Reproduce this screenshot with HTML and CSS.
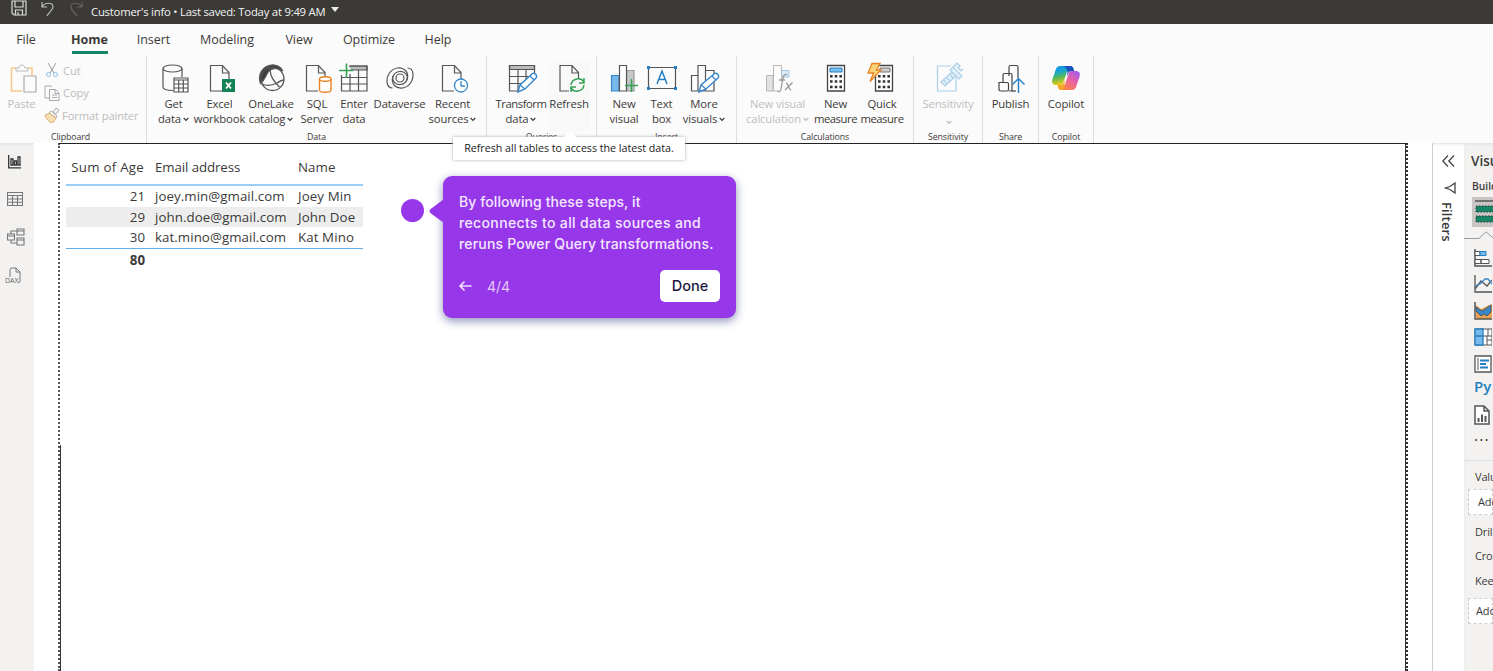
FILE: index.html
```html
<!DOCTYPE html>
<html lang="en">
<head>
<meta charset="utf-8">
<title>Customer's info</title>
<link rel="stylesheet" href="styles.css">
</head>
<body>
<svg class="defs" width="0" height="0">
  <symbol id="chev" viewBox="0 0 6 5"><path d="M.7 1 3 3.4 5.300 1" fill="none" stroke="currentColor" stroke-width="1.200"/></symbol>
  <symbol id="doc" viewBox="0 0 32 32"><path d="M18 29H6.500V3.500h12l6.500 7V17M18.500 3.500V11H25" fill="none" stroke="#555" stroke-width="1.200"/></symbol>
</svg>
<header class="titlebar">
  <svg class="save" width="16" height="16" viewBox="0 0 16 16" fill="none" stroke="#ddd" stroke-width="1.200"><path d="M1 1h14v14H3l-2-2zM4 1v6h8V1M4.500 15v-5h7v5M7 12v3"/></svg>
  <svg class="undo" width="16" height="16" viewBox="0 0 16 16" fill="none" stroke="#bbb" stroke-width="1.200"><path d="M2 1v5h5M2 6c3-5 11-5 11 0 0 3-4 5-6 9"/></svg>
  <svg class="redo" width="16" height="16" viewBox="0 0 16 16" fill="none" stroke="#676562" stroke-width="1.200"><path d="M14 1v5H9M14 6C11 1 3 1 3 6c0 3 3 5 6 9"/></svg>
  <span class="doc-name">Customer's info • Last saved: Today at 9:49 AM</span>
  <svg class="caret" width="8" height="5" viewBox="0 0 8 5"><path d="M0 0h8L4 5z" fill="#eee"/></svg>
</header>
<nav class="tabs">
  <span>File</span><span class="active">Home</span><span>Insert</span><span>Modeling</span><span>View</span><span>Optimize</span><span>Help</span>
</nav>
<section class="ribbon">
  <div class="group clipboard">
    <div class="tools">
      <div class="tool paste off">
        <svg width="32" height="32" viewBox="0 0 32 32" fill="none"><path d="M15 29H4.500V6H9M21 6h4v7" stroke="#f7c78b" stroke-width="1.500"/><path d="M9 9V6h3c0-4 6-4 6 0h3v3z" stroke="#b9b9b9"/><path d="M17 14h12v16H17z" fill="#fcfcfc" stroke="#aaa" stroke-width="1.200"/></svg>
        <b>Paste</b>
      </div>
      <div class="mini">
        <p class="cut"><svg width="16" height="16" viewBox="0 0 16 16" fill="none" stroke="#999"><path d="m4 1 6 10M12 1 6 11"/><circle cx="4.500" cy="12.500" r="2" stroke="#8abfe5"/><circle cx="11.500" cy="12.500" r="2" stroke="#8abfe5"/></svg>Cut</p>
        <p class="copy"><svg width="16" height="16" viewBox="0 0 16 16" fill="none" stroke="#aaa"><path d="M5 13H1V1h6l1 1M5.500 4.500h6l3.500 3.500v7.500H5.500zM11 4.500v4h4M8 10h5M8 12.500h5"/></svg>Copy</p>
        <p class="format"><svg width="16" height="16" viewBox="0 0 16 16" fill="none" stroke="#aaa"><path d="m9 5 3-4 3 2-3 4zM7 4l6 5-1 2-7-5z"/><path d="M5 6C4 7 2 8 1 8c1 4 4 7 7 8 2-1 3-3 4-5z" fill="#f8dfb4" stroke="#d7ad78"/></svg>Format painter</p>
      </div>
    </div>
    <div class="caption">Clipboard</div>
  </div>
  <div class="group data">
    <div class="tools">
      <div class="tool w45"><svg width="32" height="32" viewBox="0 0 32 32" fill="none" stroke="#555" stroke-width="1.200"><ellipse cx="14.500" cy="6.500" rx="9.500" ry="3.500"/><path d="M5 6.500V25c0 2 3 3.500 10 3.500M24 6.500V15"/><path d="M16 16h14v14H16z" fill="#fff"/><path d="M16 18h14M16 22h14M16 26h14M20.700 18v12M25.300 18v12"/></svg><b>Get</b><b>data<svg class="chev"><use href="#chev"/></svg></b></div>
      <div class="tool w47"><svg width="32" height="32" viewBox="0 0 32 32"><use href="#doc"/><path d="M18 17h13v13H18z" fill="#138353"/><path d="m22 20.500 5 6m0-6-5 6" stroke="#fff" stroke-width="1.900"/></svg><b>Excel</b><b>workbook</b></div>
      <div class="tool w56"><svg width="32" height="32" viewBox="0 0 32 32" fill="none" stroke="#555" stroke-width="1.300"><path d="M5.500 21.500C2.500 13 7 4 17.500 3c4.500 0 8 2 10.500 6-4-3-9-3.500-13-1-4 3-4 9-9.500 13.500z" fill="#3b3b3b"/><circle cx="17.500" cy="17" r="11.500"/><path d="M15 8c1 9 5 12 9.500 17M7 22c6 3 11 1 15-1 3-2 5-3 7-3"/></svg><b>OneLake</b><b>catalog<svg class="chev"><use href="#chev"/></svg></b></div>
      <div class="tool w36"><svg width="32" height="32" viewBox="0 0 32 32"><use href="#doc" x="-1"/><path d="M17 15h15v15H17z" fill="#fbfbfb"/><path d="M18.500 17v11c0 3 11.500 3 11.500 0V17" fill="#fff" stroke="#e78425" stroke-width="1.400"/><ellipse cx="24.250" cy="17" rx="5.750" ry="2.300" fill="#fff" stroke="#e78425" stroke-width="1.400"/></svg><b>SQL</b><b>Server</b></div>
      <div class="tool w38"><svg width="32" height="32" viewBox="0 0 32 32" fill="none" stroke="#555" stroke-width="1.200"><path d="M11 4h18v4H13" fill="#bbb"/><path d="M3.500 13v16H29V4H12M3.500 15.500H29M3.500 22H29M12 12v17M20.500 8v21"/><path d="M8.500 1.500v14M1 8.500h14" stroke="#35a155" stroke-width="1.600"/></svg><b>Enter</b><b>data</b></div>
      <div class="tool w53"><svg width="32" height="32" viewBox="0 0 32 32" fill="none" stroke="#555" stroke-width="1.200"><circle cx="16" cy="16" r="4"/><path d="M8.500 26C1.500 26 2 16 5.500 11 9.500 5.500 17 4 21.500 8.500c4.500 5 1.500 13.500-5 14-5.500.5-9-4-7.500-8.500"/><path d="M23.500 6c7 0 6.500 10 3 15-4 5.500-11.500 7-16 2.500-4.500-5-1.500-13.500 5-14 5.500-.5 9 4 7.500 8.500"/></svg><b>Dataverse</b></div>
      <div class="tool w53"><svg width="32" height="32" viewBox="0 0 32 32"><use href="#doc" x="-1"/><circle cx="24" cy="23.500" r="6.500" fill="#fff" stroke="#3887cb" stroke-width="1.300"/><path d="M24 19v5h4" fill="none" stroke="#3887cb" stroke-width="1.300"/></svg><b>Recent</b><b>sources<svg class="chev"><use href="#chev"/></svg></b></div>
    </div>
    <div class="caption">Data</div>
  </div>
  <div class="group queries">
    <div class="tools">
      <div class="tool w54 nudge"><svg width="32" height="32" viewBox="0 0 32 32" fill="none" stroke="#555" stroke-width="1.200"><path d="M3.500 3.500h25v4h-25z" fill="#bbb"/><path d="M13 29H3.500V3.500h25V12M3.500 14.500H23M3.500 21.500H16M12 8v21M20 8v9"/><path d="m12 30 2-7L26 12c2-2 6 1 4 4L19 27z" fill="#fff" stroke="#3887cb" stroke-width="1.400"/><path d="m14 23 5 4m5-13 4 4" stroke="#3887cb"/></svg><b class="tight">Transform</b><b>data<svg class="chev"><use href="#chev"/></svg></b></div>
      <div class="tool w42 hover"><svg width="32" height="32" viewBox="0 0 32 32"><use href="#doc" x="-1.500"/><path d="M14 17h16v13H14z" fill="#f8f8f8"/><path d="M16 23c1-7 10-8 13-3m0-4v5h-5m5 2c-1 7-10 8-13 3m0 4v-5h5" fill="none" stroke="#35a155" stroke-width="1.500"/></svg><b>Refresh</b></div>
    </div>
    <div class="caption">Queries</div>
  </div>
  <div class="group insert">
    <div class="tools">
      <div class="tool w36"><svg width="32" height="32" viewBox="0 0 32 32" stroke="#555" stroke-width="1.200"><path d="M3.500 13.500H11V29H3.500z" fill="#78b9eb" stroke="#3887cb"/><path d="M18.500 8.500H26V29h-7.500z" fill="#c7c7c7" stroke="#999"/><path d="M11.500 3.500h7V29h-7z" fill="#fff"/><path d="M23.500 17v13M17 23.500h13" stroke="#35a155" stroke-width="1.600"/></svg><b>New</b><b>visual</b></div>
      <div class="tool w39"><svg width="32" height="32" viewBox="0 0 32 32"><path d="M2.500 5.500h27v21h-27z" fill="none" stroke="#555" stroke-width="1.200"/><path d="M1 4h3v3H1zM28 4h3v3h-3zM1 25h3v3H1zM28 25h3v3h-3z" fill="#257fc4"/><path d="m11 22 5-13 5 13m-8.200-4.500h6.400" fill="none" stroke="#257fc4" stroke-width="1.500"/></svg><b>Text</b><b>box</b></div>
      <div class="tool w46"><svg width="32" height="32" viewBox="0 0 32 32" fill="#fcfcfc" stroke="#555" stroke-width="1.200"><path d="M3.500 13.500H10V29H3.500zM17.500 8.500H26V29h-8.500zM10 3.500h7.500V29H10z"/><path d="m11 30 2-7L26 12c2-2 6 1 4 4L18 27z" fill="#fff" stroke="#3887cb" stroke-width="1.400"/><path d="m13 23 5 4m6-13 4 4" stroke="#3887cb"/></svg><b>More</b><b>visuals<svg class="chev"><use href="#chev"/></svg></b></div>
    </div>
    <div class="caption">Insert</div>
  </div>
  <div class="group calc">
    <div class="tools">
      <div class="tool w67 off"><svg width="32" height="32" viewBox="0 0 32 32" stroke="#b8b8b8"><path d="M4.500 13.500H11V29H4.500z" fill="#e2e2e2"/><path d="M19.500 8.500H27V15h-7.500z" fill="#d7eaf8" stroke="#a8c9df"/><path d="M11.500 3.500h8V29h-8z" fill="#fcfcfc"/><path d="M16 18h15v12H16z" fill="#fcfcfc" stroke="none"/><path d="M25 13c-3-2-4 2-4.500 5L19 27c-.5 3-2 3-3.500 2M17 18h6m1 3c2 0 3 7 5 7m1.500-7.500L23 28" fill="none" stroke="#999" stroke-width="1.300"/></svg><b>New visual</b><b>calculation<svg class="chev"><use href="#chev"/></svg></b></div>
      <div class="tool w49"><svg width="32" height="32" viewBox="0 0 32 32"><path d="M7.500 3.500h17V29h-17z" fill="#fff" stroke="#444" stroke-width="1.300"/><path d="M10 6h12v4H10z" fill="#78c0f0" stroke="#257fc4"/><g id="keys" fill="none" stroke="#333" stroke-width="2.600" stroke-dasharray="2.600 2.100"><path d="M10 14.300h12.500M10 19.500h12.500M10 25h12.500"/></g></svg><b>New</b><b class="tight">measure</b></div>
      <div class="tool w44"><svg width="32" height="32" viewBox="0 0 32 32"><path d="M9.500 3.500h17V29h-17z" fill="#fff" stroke="#444" stroke-width="1.300"/><path d="M14 6h10v4H14z" fill="#ccc" stroke="#777"/><use href="#keys" x="2"/><path d="M6 1.500h8L10.500 8H15L4 19.500 7.500 11H2z" fill="#fbd37a" stroke="#e78425" stroke-width="1.300"/></svg><b>Quick</b><b class="tight">measure</b></div>
    </div>
    <div class="caption">Calculations</div>
  </div>
  <div class="group sens">
    <div class="tools">
      <div class="tool off nudge"><svg width="32" height="32" viewBox="0 0 32 32" fill="none" stroke="#a9cfe9" stroke-width="1.200"><path d="M18 4H4.500v25H23V16"/><path d="m8 20 11-10 4 4-11 10z" fill="#e4f1fa"/><path d="m17 8 3-3 9 9-3 3zM20 5l4-4 3 3-2 2 3 3 2-2M11 18l3 4m0-6 3 3m0-6 3 3" fill="#e4f1fa"/></svg><b>Sensitivity</b><b class="only-chev"><svg class="chev"><use href="#chev"/></svg></b></div>
    </div>
    <div class="caption">Sensitivity</div>
  </div>
  <div class="group share">
    <div class="tools">
      <div class="tool"><svg width="32" height="32" viewBox="0 0 32 32" fill="#fcfcfc" stroke="#444" stroke-width="1.200"><path d="M14 14V5q0-1.500 1.500-1.500h6Q23 3.500 23 5v24h-9M8 20v-7q0-1.500 1.500-1.500h6Q17 11.500 17 13v16M4 20.500h8q1.500 0 1.500 1.500v5.500q0 1.500-1.500 1.500H6q-2 0-2-1.500z"/><path d="M18 16h10v14H18z" stroke="none"/><path d="M17 29h4" /><path d="M23.500 31V16.500M17.500 22.500l6-6 6 6" fill="none" stroke="#2f85cc" stroke-width="1.500"/></svg><b>Publish</b></div>
    </div>
    <div class="caption">Share</div>
  </div>
  <div class="group copilot">
    <div class="tools">
      <div class="tool"><svg width="32" height="32" viewBox="0 0 32 32"><defs><linearGradient id="ca" x1="0" y1="0" x2=".2" y2="1"><stop offset="0" stop-color="#1b8fe8"/><stop offset=".35" stop-color="#16a6cf"/><stop offset=".65" stop-color="#58b956"/><stop offset="1" stop-color="#e7cc16"/></linearGradient><linearGradient id="cb" x1=".8" y1="0" x2=".2" y2="1"><stop offset="0" stop-color="#a55be9"/><stop offset=".5" stop-color="#ed61a0"/><stop offset="1" stop-color="#f9893e"/></linearGradient></defs><path d="M20 4h-9C7 4 6 6 5 10L2.500 17c-1 4 0 6 4 6H10c2 0 3-1 3.500-3l3-9c.5-2 1.500-3 3.500-3z" fill="url(#ca)"/><path d="M12 28h9c4 0 5-2 6-6l2.500-7c1-4 0-6-4-6H22c-2 0-3 1-3.500 3l-3 9c-.5 2-1.500 3-3.500 3z" fill="url(#cb)"/><path d="M12 4h8c3 0 3.500 2 4.300 5H22c-2.500 0-3.500 1-4 3l-1.500 3 1-4c0-4-2-7-5.500-7z" fill="#1951bd"/><path d="M7.500 23H10c2.500 0 3.500-1 4-3l1.500-3-1 4c0 4-1 7-3 7-3 0-3.500-2-4-5z" fill="#f4a62c"/></svg><b>Copilot</b></div>
    </div>
    <div class="caption">Copilot</div>
  </div>
</section>
<main class="workspace">
  <aside class="rail">
    <svg width="16" height="16" viewBox="0 0 16 16" fill="none" stroke="#333" stroke-width="1.300"><path d="M1.700 1v12.800H14M4 5h2v6H4zM7.500 7h2v4h-2zM11 3h2v8h-2z"/></svg>
    <svg width="16" height="16" viewBox="0 0 16 16" fill="none" stroke="#777" stroke-width="1.100"><path d="M.5 1.500h15v13H.5zM.5 4.500h15M.5 8h15M.5 11.200h15M5.500 4.500v10M10.500 4.500v10"/></svg>
    <svg width="19" height="18" viewBox="0 0 19 18" fill="none" stroke="#777" stroke-width="1.100"><path d="M.5 6h7v6h-7zM.5 8h7M10 1h7v6h-7zM10 3h7M10 10h7v7h-7zM10 12h7M4 6V3h6M4 12v3h6"/></svg>
    <svg class="dax-icon" width="18" height="18" viewBox="0 0 18 18" fill="none" stroke="#777"><path d="M5 10V3q0-2 2-2h4l4 4v9q0 2-2 2M11 1v4h4"/><text x="0" y="16" class="dax">DAX</text></svg>
  </aside>
  <section class="canvas">
    <div class="page">
      <div class="table">
        <div class="row head"><span>Sum of Age</span><span>Email address</span><span>Name</span></div>
        <div class="row"><span>21</span><span>joey.min@gmail.com</span><span>Joey Min</span></div>
        <div class="row alt"><span>29</span><span>john.doe@gmail.com</span><span>John Doe</span></div>
        <div class="row"><span>30</span><span>kat.mino@gmail.com</span><span>Kat Mino</span></div>
        <div class="row total"><span>80</span></div>
      </div>
    </div>
  </section>
  <aside class="filters">
    <svg width="13" height="12" viewBox="0 0 13 12" fill="none" stroke="#444" stroke-width="1.300"><path d="M6 .5.8 6 6 11.500M12 .5 6.800 6l5.200 5.500"/></svg>
    <svg class="funnel" width="12" height="12" viewBox="0 0 12 12" fill="none" stroke="#444" stroke-width="1.300"><path d="M11 1v10L6 7.500 1.500 6 6 4.500z"/></svg>
    <span>Filters</span>
  </aside>
  <aside class="visuals">
    <h2>Visualizations</h2>
    <h3>Build visual</h3>
    <div class="selected"><svg width="24" height="24" viewBox="0 0 24 24"><path d="M0 1h24" stroke="#555" stroke-width="1.500"/><path d="M1 6h24v6H1zM1 16h24v6H1z" fill="#168467" stroke="#333" stroke-dasharray="1.500 1.500"/></svg></div>
    <svg class="notch" width="29" height="8" viewBox="0 0 29 8" fill="none" stroke="#999"><path d="M0 7.500h15L22 .8l7 6"/></svg>
    <div class="gallery">
      <svg width="18" height="18" viewBox="0 0 18 18" fill="#fff" stroke="#555"><path d="M1 0v17h17" fill="none" stroke-width="1.500"/><path d="M1 2.500h5v4H1zM1 10.500h6v4H1zM7 10.500h8v4H7z"/><path d="M6 2.500h6v4H6z" fill="#78b9eb" stroke="#257fc4"/></svg>
      <svg width="18" height="18" viewBox="0 0 18 18" fill="none" stroke="#555" stroke-width="1.300"><path d="M1 0v17h17M1 14l6-8 6 5 5-6"/><path d="m1 11 5-2 5-5 3 0 4 5" stroke="#3887cb"/></svg>
      <svg width="18" height="18" viewBox="0 0 18 18"><path d="m2 3 5 4 6-3 5-2v15H2z" fill="#e9a354"/><path d="m2 5 6 4 9-6v7l-4 4-3-2-3 2-5-5z" fill="#3887cb" stroke="#555"/><path d="M1 0v17h17" fill="none" stroke="#555" stroke-width="1.500"/></svg>
      <svg width="18" height="18" viewBox="0 0 18 18" fill="#fff" stroke="#555"><path d="M1 1h17v16H1z"/><path d="M1 1h8v16H1zM1 8h8" fill="#78b9eb" stroke="#257fc4" stroke-width="1.300"/><path d="M9 8h9M13 8v9M13 12h5M14 1v7"/></svg>
      <svg width="18" height="18" viewBox="0 0 18 18" fill="#fff" stroke="#555" stroke-width="1.300"><path d="M1 1h16v16H1z"/><path d="M4 3v12" stroke-width="1"/><path d="M6 5.500h9M6 9h6M6 12.500h8" stroke="#257fc4" stroke-width="1.800"/></svg>
      <span class="py">Py</span>
      <svg width="16" height="20" viewBox="0 0 16 20" fill="#fff" stroke="#555" stroke-width="1.500"><path d="M1 1h9l5 5v13H1zM10 1v5h5"/><path d="M4.500 17v-4M8 17V9.500M11.500 17v-6" stroke-width="2"/></svg>
      <span class="dots">···</span>
    </div>
    <div class="fields">
      <p class="label values">Values</p><p class="well first">Add data fields here</p>
      <p class="label drill">Drill through</p><p class="label cross">Cross-report</p><p class="label keep">Keep all filters</p><p class="well">Add drill-through fields here</p>
    </div>
  </aside>
</main>
<div class="tooltip">Refresh all tables to access the latest data.</div>
<div class="beacon"></div>
<div class="coach">
  <svg class="pointer" width="15" height="24" viewBox="0 0 15 24"><path d="M15 0v24L2 14.500q-3-2.500 0-4.700z" fill="#9638e9"/></svg>
  <p><span class="l1">By following these steps, it</span><br><span class="l2">reconnects to all data sources and</span><br><span class="l3">reruns Power Query transformations.</span></p>
  <div class="actions">
    <svg width="13" height="10" viewBox="0 0 13 10" fill="none" stroke="#f0e0ff" stroke-width="1.700" stroke-linecap="round" stroke-linejoin="round"><path d="M12 5H1M5 1 1 5l4 4"/></svg>
    <span class="step">4/4</span><button>Done</button>
  </div>
</div>
</body>
</html>
```
FILE: styles.css
```css
* { box-sizing: border-box; }
body { margin: 0; width: 1493px; height: 671px; overflow: hidden; display: flex; flex-direction: column; position: relative; background: #fff; color: #3b3a39; font-family: "Open Sans", "Noto Sans", sans-serif; }
p, h2, h3 { margin: 0; }
b { font-weight: 400; }
svg { flex: none; }
.defs { position: absolute; }

.titlebar { flex: 0 0 24px; display: flex; background: #3b3a37; color: #f4f4f4; padding-left: 11px; font-size: 11.300px; line-height: 24px; }
.undo { margin: 1px 0 0 13px; }
.redo { margin: 1px 0 0 12px; }
.doc-name { margin-left: 7px; width: 235px; white-space: nowrap; letter-spacing: -.22px; }
.caret { margin: 7px 0 0 5px; }

.tabs { flex: 0 0 32px; display: flex; padding-left: 4px; background: #fbfbfb; font-size: 12.500px; line-height: 32px; }
.tabs span { display: flex; justify-content: center; width: 44px; white-space: nowrap; letter-spacing: -.05px; }
.tabs span:nth-child(2) { width: 83px; }
.tabs span:nth-child(3) { width: 45px; }
.tabs span:nth-child(4) { width: 102px; }
.tabs span:nth-child(5) { width: 42px; }
.tabs span:nth-child(6) { width: 98px; }
.tabs span:nth-child(7) { width: 40px; }
.tabs .active { font-weight: 700; background: linear-gradient(#168467, #168467) 50% 27px / 36px 3px no-repeat; }

.ribbon { flex: 0 0 87px; display: flex; background: #fbfbfb; }
.group { height: 87px; border-right: 1px solid #dedede; display: flex; flex-direction: column; padding-top: 6px; }
.tools { display: flex; height: 70px; }
.tool { display: flex; flex-direction: column; align-items: center; width: 100%; font-size: 11.300px; line-height: 15px; white-space: nowrap; letter-spacing: -.15px; }
.tool b { display: flex; align-items: center; }
.tool > svg { margin-bottom: 2px; }
.tool .tight { letter-spacing: -.45px; }
.off { color: #bdbdbd; }
.chev { width: 6px; height: 5px; margin: 2px 0 0 2px; }
.only-chev { height: 15px; padding-top: 5px; }
.caption { font-size: 8.800px; line-height: 12px; text-align: center; letter-spacing: -.1px; }
.clipboard { width: 147px; }
.clipboard .caption { padding-right: 5px; }
.data { width: 340px; }
.data .tools { padding-left: 4px; }
.queries { width: 110px; }
.queries .tools { padding-left: 7px; }
.insert { width: 140px; }
.insert .tools { padding-left: 9px; }
.calc { width: 177px; }
.calc .tools { padding-left: 7px; }
.sens { width: 69px; }
.share { width: 56px; }
.copilot { width: 55px; }
.w36 { width: 36px; } .w38 { width: 38px; } .w39 { width: 39px; } .w42 { width: 42px; } .w44 { width: 44px; } .w45 { width: 45px; } .w46 { width: 46px; } .w47 { width: 47px; } .w49 { width: 49px; } .w53 { width: 53px; } .w54 { width: 54px; } .w56 { width: 56px; } .w67 { width: 67px; }
.nudge > svg { margin-left: 2px; }
.hover { background: #f8f8f8; }
.hover > svg { margin-left: 4px; }
.paste { width: 43px; }
.paste > svg { margin-left: 2px; }
.mini { margin-top: -3px; color: #bdbdbd; font-size: 11.200px; letter-spacing: -.12px; }
.mini p { display: flex; align-items: center; gap: 3px; height: 22.500px; padding-left: 1px; white-space: nowrap; }
.mini .format { gap: 2px; }

.workspace { flex: 1; display: flex; min-height: 0; }
.rail { width: 34px; background: #f3f2f1; display: flex; flex-direction: column; padding: 11px 0 0 7px; gap: 21px; box-shadow: inset 0 3px 3px -2px #ddd; }
.dax-icon { margin-left: -2px; }
.dax { font-size: 7px; fill: #666; stroke: none; }
.canvas { flex: 1; padding: 0 24px 0 24px; }
.page { height: 100%; border-top: 1px solid #222; border-left: 2px dotted #555; border-right: 2px dotted #333; padding: 8px 0 0 6px; background: linear-gradient(#333, #333) 0 301px / 1px 400px no-repeat, linear-gradient(#333, #333) 100% 0 / 1px 100% no-repeat; }
.table { width: 297px; font-size: 13.300px; }
.row { display: grid; grid-template-columns: 83px 143px 1fr; height: 20.700px; line-height: 20px; white-space: nowrap; }
.row span:first-child { text-align: right; padding-right: 4px; }
.row span:nth-child(2) { padding-left: 6px; letter-spacing: .06px; }
.row span:nth-child(3) { padding-left: 6px; letter-spacing: .1px; }
.row.head span:first-child { letter-spacing: .25px; padding-right: 5px; }
.row.head span:nth-child(2) { letter-spacing: -.1px; }
.head { height: 34px; line-height: 30px; border-bottom: 2px solid #9bcdf5; }
.alt { background: #ededed; }
.total { border-top: 1px solid #62aeea; font-weight: 700; line-height: 22px; height: 24px; }

.filters { width: 32px; border-left: 1px solid #cfcfcf; display: flex; flex-direction: column; align-items: flex-start; padding: 12px 0 0 9px; box-shadow: inset 0 3px 3px -2px #ddd; }
.funnel { margin: 15px 0 0 2px; }
.filters span { writing-mode: vertical-rl; font-size: 13px; font-weight: 600; line-height: 16px; margin: 8px 0 0 -3px; letter-spacing: .15px; }
.visuals { width: 29px; background: #f3f2f1; overflow: hidden; white-space: nowrap; display: flex; flex-direction: column; box-shadow: inset 1px 3px 3px -2px #ddd; }
.visuals h2 { font-size: 13.500px; font-weight: 600; line-height: 18px; margin: 9px 0 0 7px; }
.visuals h3 { font-size: 10.300px; font-weight: 600; line-height: 16px; margin: 8px 0 0 8px; }
.selected { background: #c8c6c4; height: 30px; margin: 3px 0 0 8px; padding: 3px 0 0 3px; }
.notch { margin-top: 4px; }
.gallery { display: flex; flex-direction: column; padding: 10px 0 0 10px; gap: 8.400px; height: 222px; border-bottom: 1px solid #ddd; }
.py { color: #2580bf; font-size: 15px; line-height: 16px; font-weight: 600; margin: -2.500px 0 2.500px; }
.dots { font-size: 16px; line-height: 12px; letter-spacing: 1px; }
.fields { font-size: 11px; letter-spacing: -.15px; }
.label { line-height: 16px; padding-left: 11px; }
.values { margin-top: 8px; }
.well { height: 26px; line-height: 24px; margin-left: 4px; padding-left: 7px; background: #fff; border: 1px dashed #ccc; margin-top: 9px; }
.first { margin-top: 4px; padding-left: 9px; }
.drill { margin-top: 9px; } .cross { margin-top: 8px; } .keep { margin-top: 9px; }

.tooltip { position: absolute; left: 453px; top: 137px; width: 232px; height: 23px; background: #fff; font-size: 10.700px; line-height: 23px; text-align: center; white-space: nowrap; box-shadow: 0 0 3px #aaa; letter-spacing: -.02px; color: #222; }
.tooltip::before { content: ""; position: absolute; left: 110px; top: -6px; border: solid transparent; border-width: 0 7px 7px; border-bottom-color: #fff; }
.beacon { position: absolute; left: 401px; top: 199px; width: 23px; height: 23px; border-radius: 50%; background: #9638e9; }
.coach { position: absolute; left: 443px; top: 176px; width: 293px; height: 142px; border-radius: 9px; background: #9638e9; color: #f4e8ff; padding: 15px 16px 16px; font-family: Inter, sans-serif; font-size: 14px; font-weight: 500; box-shadow: 0 3px 10px #8b90b8; }
.coach p { line-height: 21px; white-space: nowrap; }
.l1 { letter-spacing: .08px; }
.l2 { letter-spacing: .36px; }
.l3 { letter-spacing: .19px; }
.pointer { position: absolute; left: -14px; top: 23px; }
.actions { display: flex; align-items: center; margin-top: 16px; }
.step { margin-left: 15px; color: #e5c8fb; font-weight: 400; }
.actions button { margin-left: auto; width: 60px; height: 32px; padding: 0 0 1px; border: 0; border-radius: 5px; background: #fff; color: #1d1740; font: 500 14.500px Inter, sans-serif; }
```
